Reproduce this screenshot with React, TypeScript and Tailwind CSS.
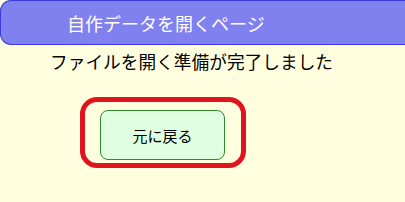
export default function App() {
  return (
    <div className="w-[405px] h-[202px] overflow-hidden bg-[#ffffe0] font-['Noto_Sans_CJK_JP',sans-serif]">
      <div className="w-[430px] h-[45px] bg-[#8080ee] border-y border-l border-[#3a3ad8] rounded-l-[11px] flex items-center pl-[66px] text-white text-[18px] leading-none">
        自作データを開くページ
      </div>
      <div className="pl-[50px] pt-[4px] text-[17.7px] leading-[24px] text-black">
        ファイルを開く準備が完了しました
      </div>
      <div className="ml-[80px] mt-[24px] w-[166px] h-[71px] border-[5px] border-[#e0141e] rounded-[17px] flex pl-[15px] pt-[8px]">
        <button className="w-[125px] h-[50px] bg-[#e0ffe0] border border-[#2e8b2e] rounded-[8px] flex items-center justify-center text-[15px] text-black leading-none">
          元に戻る
        </button>
      </div>
    </div>
  );
}
